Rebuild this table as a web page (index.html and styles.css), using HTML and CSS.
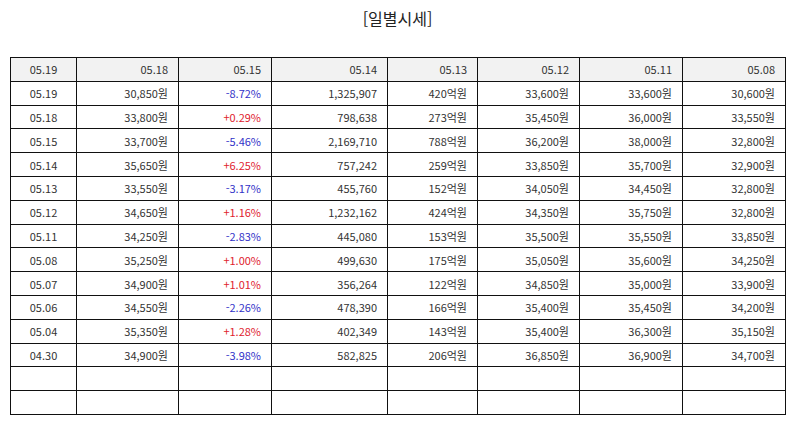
FILE: index.html
```html
<!DOCTYPE html>
<html lang="ko">
<head>
<meta charset="utf-8">
<link rel="stylesheet" href="styles.css">
</head>
<body>
<div class="page">
  <h1 class="title">[일별시세]</h1>
  <table class="prices">
    <colgroup>
      <col class="c1"><col class="c2"><col class="c3"><col class="c4"><col class="c5"><col class="c6"><col class="c7"><col class="c8">
    </colgroup>
    <thead>
      <tr><th class="date">05.19</th><th>05.18</th><th>05.15</th><th>05.14</th><th>05.13</th><th>05.12</th><th>05.11</th><th>05.08</th></tr>
    </thead>
    <tbody>
      <tr><td class="date">05.19</td><td>30,850원</td><td class="down">-8.72%</td><td>1,325,907</td><td>420억원</td><td>33,600원</td><td>33,600원</td><td>30,600원</td></tr>
      <tr><td class="date">05.18</td><td>33,800원</td><td class="up">+0.29%</td><td>798,638</td><td>273억원</td><td>35,450원</td><td>36,000원</td><td>33,550원</td></tr>
      <tr><td class="date">05.15</td><td>33,700원</td><td class="down">-5.46%</td><td>2,169,710</td><td>788억원</td><td>36,200원</td><td>38,000원</td><td>32,800원</td></tr>
      <tr><td class="date">05.14</td><td>35,650원</td><td class="up">+6.25%</td><td>757,242</td><td>259억원</td><td>33,850원</td><td>35,700원</td><td>32,900원</td></tr>
      <tr><td class="date">05.13</td><td>33,550원</td><td class="down">-3.17%</td><td>455,760</td><td>152억원</td><td>34,050원</td><td>34,450원</td><td>32,800원</td></tr>
      <tr><td class="date">05.12</td><td>34,650원</td><td class="up">+1.16%</td><td>1,232,162</td><td>424억원</td><td>34,350원</td><td>35,750원</td><td>32,800원</td></tr>
      <tr><td class="date">05.11</td><td>34,250원</td><td class="down">-2.83%</td><td>445,080</td><td>153억원</td><td>35,500원</td><td>35,550원</td><td>33,850원</td></tr>
      <tr><td class="date">05.08</td><td>35,250원</td><td class="up">+1.00%</td><td>499,630</td><td>175억원</td><td>35,050원</td><td>35,600원</td><td>34,250원</td></tr>
      <tr><td class="date">05.07</td><td>34,900원</td><td class="up">+1.01%</td><td>356,264</td><td>122억원</td><td>34,850원</td><td>35,000원</td><td>33,900원</td></tr>
      <tr><td class="date">05.06</td><td>34,550원</td><td class="down">-2.26%</td><td>478,390</td><td>166억원</td><td>35,400원</td><td>35,450원</td><td>34,200원</td></tr>
      <tr><td class="date">05.04</td><td>35,350원</td><td class="up">+1.28%</td><td>402,349</td><td>143억원</td><td>35,400원</td><td>36,300원</td><td>35,150원</td></tr>
      <tr><td class="date">04.30</td><td>34,900원</td><td class="down">-3.98%</td><td>582,825</td><td>206억원</td><td>36,850원</td><td>36,900원</td><td>34,700원</td></tr>
      <tr><td></td><td></td><td></td><td></td><td></td><td></td><td></td><td></td></tr>
      <tr><td></td><td></td><td></td><td></td><td></td><td></td><td></td><td></td></tr>
    </tbody>
  </table>
</div>
</body>
</html>
```
FILE: styles.css
```css
html, body {
  margin: 0;
  padding: 0;
  background: #fff;
}
.page {
  padding: 0 10px;
  font-family: "Noto Sans CJK KR", "Noto Sans", sans-serif;
  color: #333;
}
.title {
  margin: 0;
  padding-top: 8px;
  height: 57px;
  box-sizing: border-box;
  text-align: center;
  font-size: 16px;
  font-weight: normal;
  line-height: 20px;
  color: #222;
}
.prices {
  width: 775px;
  border-collapse: collapse;
  table-layout: fixed;
  font-size: 11px;
}
.c1 { width: 66px; }
.c2 { width: 102px; }
.c3 { width: 93px; }
.c4 { width: 116px; }
.c5 { width: 90px; }
.c6 { width: 102px; }
.c7 { width: 103px; }
.c8 { width: 103px; }
.prices th,
.prices td {
  border: 1px solid #111;
  height: 22.8px;
  padding: 0 10px 0 0;
  text-align: right;
  font-weight: normal;
  line-height: 14px;
  white-space: nowrap;
  color: #333;
}
.prices th {
  background: #f2f2f2;
}
.prices .date {
  text-align: center;
  padding: 0;
}
.prices .down { color: #3232c8; }
.prices .up { color: #e0222e; }
```
